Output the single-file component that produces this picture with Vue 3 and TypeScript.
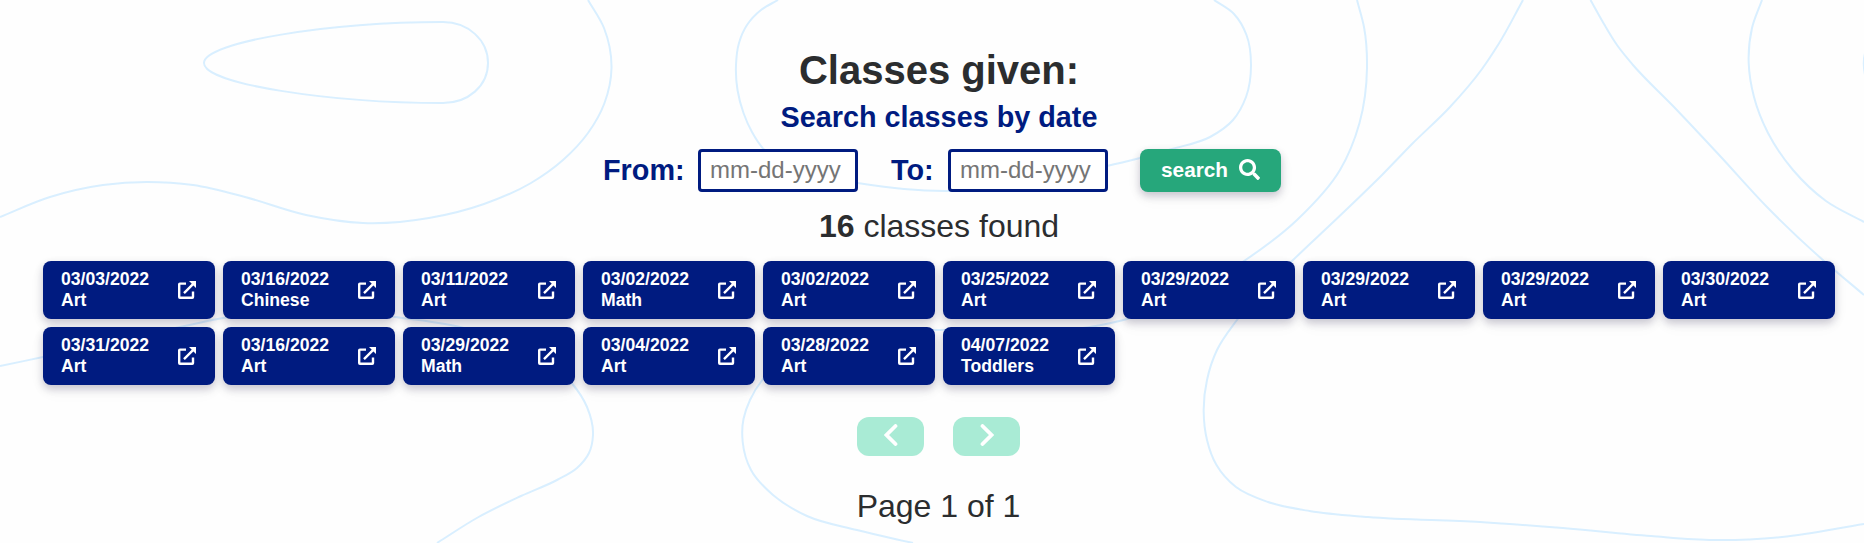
<script setup lang="ts">
import { ref } from 'vue'

type Point = [number, number]

interface ClassEntry {
  date: string
  subject: string
}

const classes: ClassEntry[] = [
  { date: '03/03/2022', subject: 'Art' },
  { date: '03/16/2022', subject: 'Chinese' },
  { date: '03/11/2022', subject: 'Art' },
  { date: '03/02/2022', subject: 'Math' },
  { date: '03/02/2022', subject: 'Art' },
  { date: '03/25/2022', subject: 'Art' },
  { date: '03/29/2022', subject: 'Art' },
  { date: '03/29/2022', subject: 'Art' },
  { date: '03/29/2022', subject: 'Art' },
  { date: '03/30/2022', subject: 'Art' },
  { date: '03/31/2022', subject: 'Art' },
  { date: '03/16/2022', subject: 'Art' },
  { date: '03/29/2022', subject: 'Math' },
  { date: '03/04/2022', subject: 'Art' },
  { date: '03/28/2022', subject: 'Art' },
  { date: '04/07/2022', subject: 'Toddlers' },
]

const from = ref('')
const to = ref('')
const page = ref(1)
const pageCount = 1

// Turns a list of points into a smooth cubic path (Catmull-Rom).
function smooth(points: Point[]): string {
  let d = `M${points[0][0]} ${points[0][1]}`
  for (let i = 0; i < points.length - 1; i++) {
    const p0 = points[Math.max(i - 1, 0)]
    const p1 = points[i]
    const p2 = points[i + 1]
    const p3 = points[Math.min(i + 2, points.length - 1)]
    // Knot spacing follows the distance between points, so uneven spacing does not overshoot.
    const d1 = Math.hypot(p1[0] - p0[0], p1[1] - p0[1]) || 1
    const d2 = Math.hypot(p2[0] - p1[0], p2[1] - p1[1])
    const d3 = Math.hypot(p3[0] - p2[0], p3[1] - p2[1]) || 1
    const c = [0, 1].map((k) => {
      const m1 = i === 0 ? (p2[k] - p1[k]) / d2 : (d2 * (p1[k] - p0[k]) / d1 + d1 * (p2[k] - p1[k]) / d2) / (d1 + d2)
      const m2 = i === points.length - 2 ? (p2[k] - p1[k]) / d2 : (d3 * (p2[k] - p1[k]) / d2 + d2 * (p3[k] - p2[k]) / d3) / (d2 + d3)
      return [p1[k] + (m1 * d2) / 3, p2[k] - (m2 * d2) / 3]
    })
    d += `C${c[0][0].toFixed(1)} ${c[1][0].toFixed(1)} ${c[0][1].toFixed(1)} ${c[1][1].toFixed(1)} ${p2[0]} ${p2[1]}`
  }
  return d
}

const contours: string[] = [
  'M443 22C468 22 488 40 488 63S468 103 443 103C330 103 204 84 204 63S330 22 443 22Z',
  smooth([[588, 0], [604, 28], [611.5, 68], [604.5, 103], [588, 133], [563, 160], [531, 183], [484, 204], [429, 218], [363, 223], [306, 215], [245, 197], [193, 185], [147, 182], [103, 185], [50, 197], [0, 217]]),
  smooth([[778, 0], [761, 10], [747, 25], [739, 43], [736, 65], [737.5, 90], [743.5, 113], [752, 132], [763.5, 149], [800, 172], [857.6, 183], [904, 189], [946, 191], [1030, 184], [1107, 166], [1140, 158], [1172, 149], [1210, 137], [1233, 120], [1246, 97], [1251, 65], [1246.5, 35], [1234, 14], [1214, 0]]),
  smooth([[1357, 0], [1364, 27], [1367, 68], [1359.5, 123], [1340, 170], [1297, 220], [1244, 261], [1190, 293], [1127, 319], [1090, 327], [1010, 330], [940, 330], [850, 334], [795, 352], [763, 379], [750, 400], [743.5, 419], [742.7, 442], [751, 470], [773, 495], [807, 516], [857, 530], [913, 543]]),
  smooth([[0, 366], [43, 357], [110, 342], [180, 327], [223, 318], [270, 311], [330, 310], [395, 317], [460, 327], [520, 347], [550, 363], [572.5, 384], [587, 407], [593, 435], [589, 453], [577, 468], [557, 480], [521, 496], [478.6, 517], [437, 543]]),
  smooth([[1523, 0], [1498, 45], [1482, 69], [1450, 107], [1412, 144], [1382, 175], [1348, 208], [1292, 261], [1260, 292], [1237, 320], [1217, 350], [1207, 380], [1203.7, 412], [1207, 440], [1216.5, 465], [1236, 487], [1268, 502], [1309.5, 511], [1368, 517], [1480, 522], [1563, 528], [1651, 536], [1714, 540], [1782, 537], [1864, 524]].map(([x, y]): Point => [x, y])),
  smooth([[1590.5, 0], [1604, 24], [1617, 45], [1633, 65], [1674, 107], [1721, 157], [1767, 207], [1824, 261], [1864, 295]]),
  smooth([[1762, 0], [1752, 28], [1748.7, 63], [1754, 97], [1768, 133], [1793, 170], [1826, 201], [1864, 222]]),
  'M1865 53Q1862.5 63 1865 75',
]
</script>

<template>
  <div class="page">
    <svg class="backdrop" viewBox="0 0 1864 543" aria-hidden="true">
      <path v-for="(d, i) in contours" :key="i" :d="d" />
    </svg>

    <main class="content">
      <h1>Classes given:</h1>
      <h2>Search classes by date</h2>

      <form class="search" @submit.prevent>
        <label for="from">From:</label>
        <input id="from" v-model="from" type="text" placeholder="mm-dd-yyyy" />
        <label for="to" class="to">To:</label>
        <input id="to" v-model="to" type="text" placeholder="mm-dd-yyyy" />
        <button type="submit" class="submit">
          <span>search</span>
          <svg viewBox="0 0 512 512" aria-hidden="true">
            <path d="M505 442.700L405.300 343c-4.500-4.500-10.600-7-17-7H372c27.600-35.300 44-79.700 44-128C416 93.100 322.900 0 208 0S0 93.100 0 208s93.100 208 208 208c48.300 0 92.700-16.400 128-44v16.300c0 6.400 2.500 12.500 7 17l99.700 99.700c9.400 9.400 24.600 9.400 33.900 0l28.300-28.300c9.400-9.400 9.400-24.600.1-34zM208 336c-70.700 0-128-57.200-128-128 0-70.700 57.200-128 128-128 70.700 0 128 57.200 128 128 0 70.700-57.200 128-128 128z" />
          </svg>
        </button>
      </form>

      <p class="count"><strong>{{ classes.length }}</strong> classes found</p>

      <div class="grid">
        <button v-for="(item, i) in classes" :key="i" type="button" class="card">
          <span class="info">{{ item.date }}<br />{{ item.subject }}</span>
          <svg viewBox="0 0 18 18" aria-hidden="true">
            <path class="line" d="M8 2.600H1.900Q1.200 2.600 1.200 3.300V16.100Q1.200 16.800 1.900 16.800H14.300Q15 16.800 15 16.100V10.500M6 12.200L15 3.200" />
            <path class="tip" d="M11 0H18V7L15.700 4.700L13.300 2.300Z" />
          </svg>
        </button>
      </div>

      <nav class="pager">
        <button type="button" disabled aria-label="Previous page">
          <svg viewBox="0 0 14 22" aria-hidden="true"><path d="M11.500 2L2.500 11L11.500 20" /></svg>
        </button>
        <button type="button" disabled aria-label="Next page">
          <svg viewBox="0 0 14 22" aria-hidden="true"><path d="M2.500 2L11.500 11L2.500 20" /></svg>
        </button>
      </nav>

      <p class="status">Page {{ page }} of {{ pageCount }}</p>
    </main>
  </div>
</template>

<style>
body {
  background: #fefefe;
}
</style>

<style scoped>
.page {
  position: relative;
  box-sizing: border-box;
  height: 543px;
  overflow: hidden;
  background: #fefefe;
  color: #2b2d2f;
  font-family: "Liberation Sans", Arial, sans-serif;
}

.backdrop {
  position: absolute;
  inset: 0;
  width: 1864px;
  height: 543px;
  fill: none;
  stroke: #d9efff;
  stroke-width: 2;
}

.content {
  position: relative;
  display: flex;
  flex-direction: column;
  align-items: center;
  padding: 46px 29px 0 43px;
}

h1,
h2,
p {
  margin: 0;
}

h1 {
  font-size: 40px;
  line-height: 48px;
}

h2 {
  margin-top: 6px;
  color: #001b80;
  font-size: 28.8px;
  line-height: 35px;
}

.search {
  display: flex;
  align-items: center;
  margin: 14px 0 0 6px;
}

label {
  flex: none;
  width: 95px;
  color: #001b80;
  font-size: 28.8px;
  font-weight: 700;
  line-height: 43px;
}

.to {
  width: 57px;
  margin-left: 33px;
}

input {
  box-sizing: border-box;
  width: 160px;
  height: 43px;
  padding: 0 9px 2px;
  border: 3px solid #001b80;
  border-radius: 4px;
  background: #fff;
  font: 24px "Liberation Sans", Arial, sans-serif;
}

input::placeholder {
  color: #757575;
}

button {
  margin: 0;
  border: 0;
  color: #fff;
  font-family: inherit;
}

.submit,
.card {
  border-radius: 8px;
  box-shadow: 0 4px 8px rgba(20, 10, 50, 0.22), 0 6px 20px rgba(20, 10, 50, 0.03);
  font-weight: 700;
}

.submit {
  display: flex;
  align-items: center;
  gap: 11px;
  width: 141px;
  height: 43px;
  margin-left: 32px;
  padding: 0 20px 2px 21px;
  background: #26a77b;
  font-size: 20.8px;
}

.submit svg {
  flex: none;
  width: 21px;
  height: 21px;
  fill: #fff;
}

.count {
  margin-top: 15px;
  font-size: 32px;
  line-height: 38px;
}

.grid {
  display: grid;
  grid-template-columns: repeat(10, 172px);
  gap: 8px;
  margin-top: 16px;
}

.card {
  display: flex;
  align-items: center;
  justify-content: space-between;
  height: 58px;
  padding: 0 19px 0 18px;
  background: #001b80;
  font-size: 17.6px;
  line-height: 21px;
  text-align: left;
}

.card svg {
  width: 18px;
  height: 18px;
  margin-bottom: 1px;
  fill: none;
}

.card .line {
  stroke: #fff;
  stroke-width: 2.4;
}

.card .tip {
  fill: #fff;
}

.pager {
  display: flex;
  gap: 29px;
  margin: 32px 1px 0 0;
}

.pager button {
  display: flex;
  justify-content: center;
  width: 67px;
  height: 39px;
  padding: 7px 0 0;
  border-radius: 12px;
  background: #a9ebd5;
}

.pager svg {
  width: 14px;
  height: 22px;
  fill: none;
  stroke: #fff;
  stroke-width: 3.8;
  stroke-linecap: round;
}

.status {
  margin: 31px 1px 0 0;
  font-size: 32px;
  line-height: 38px;
}
</style>
